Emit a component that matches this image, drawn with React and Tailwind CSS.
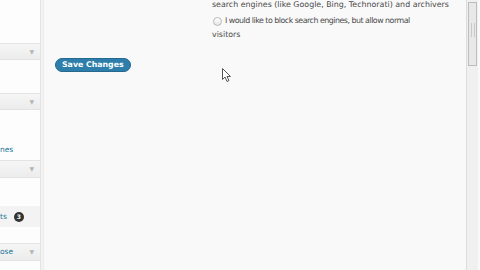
import React from "react";

function Arrow() {
  return <span className="text-[6px] leading-none text-[#b4b4b4]">▼</span>;
}

function SideHead({ children, h = "h-[17px]" }) {
  return (
    <div className={`${h} flex items-center justify-between pr-[6px] bg-gradient-to-b from-[#f6f6f6] to-[#ececec] border-y border-[#e3e3e3]`}>
      <span className="text-[7.5px] text-[#21759b] leading-none">{children}</span>
      <Arrow />
    </div>
  );
}

export default function App() {
  const font = { fontFamily: '"DejaVu Sans", Verdana, sans-serif' };

  return (
    <div className="relative w-[480px] h-[270px] overflow-hidden bg-[#f9f9f9] flex" style={font}>
      {/* Sidebar */}
      <div className="w-[41px] h-full bg-[#fdfdfd] border-r border-[#e4e4e4] flex flex-col">
        <div className="h-[43px]" />
        <SideHead />
        <div className="h-[33px]" />
        <SideHead />
        <div className="h-[34px]" />
        <div className="h-[12px] flex items-center text-[7.5px] text-[#21759b] leading-none">nes</div>
        <div className="h-[4px]" />
        <SideHead h="h-[18px]" />
        <div className="h-[28px]" />
        <div className="h-[21px] flex items-center gap-[7px] bg-[#f3f3f3] text-[7.5px] text-[#21759b] leading-none">
          <span>ts</span>
          <span className="w-[10px] h-[10px] rounded-full bg-[#333] text-white text-[6px] font-bold flex items-center justify-center">3</span>
        </div>
        <div className="h-[16px]" />
        <SideHead h="h-[18px]">ose</SideHead>
      </div>
      <div className="w-[3px] h-full bg-[#f3f3f3] border-r border-[#ececec]" />

      {/* Main */}
      <div className="flex-1 h-full flex flex-col text-[7.9px] text-[#4a4a4a] leading-none">
        <div className="pl-[168px] pt-[1px] flex flex-col">
          <div className="h-[8px] flex items-center">search engines (like Google, Bing, Technorati) and archivers</div>
          <div className="h-[14px] mt-[5px] flex items-center gap-[3px] pl-[1px]">
            <span className="w-[9px] h-[9px] rounded-full border border-[#b8b8b8] bg-gradient-to-b from-[#fff] to-[#e6e6e6]" />
            <span className="tracking-[-0.5px]">I would like to block search engines, but allow normal</span>
          </div>
          <div className="h-[8px] mt-[3px] flex items-center">visitors</div>
        </div>
        <div className="pl-[11px] mt-[19px]">
          <button className="h-[14px] px-[6px] rounded-full bg-[#2e7eab] border border-[#25698f] text-white text-[7.8px] font-bold leading-none flex items-center" style={font}>
            Save Changes
          </button>
        </div>
      </div>

      {/* Scrollbar */}
      <div className="w-[12px] h-full bg-[#f0f0f0] border-l border-[#dcdcdc] flex flex-col items-center">
        <div className="w-[9px] h-[64px] mt-[2px] bg-[#e8e8e8] border border-[#bdbdbd] flex flex-col items-center pt-[20px]">
          <div className="w-[4px] h-[14px] border-x border-[#c9c9c9]" />
        </div>
      </div>
      <div className="w-[2px] h-full bg-[#fafafa]" />

      {/* Cursor */}
      <svg className="absolute left-[222px] top-[68px]" width="10" height="15" viewBox="0 0 10 15">
        <path d="M0.5 0.5 L0.5 11.5 L3 9 L5 13.5 L7 12.5 L5 8.5 L8.5 8.5 Z" fill="#fff" stroke="#555" strokeWidth="1" />
      </svg>
    </div>
  );
}
